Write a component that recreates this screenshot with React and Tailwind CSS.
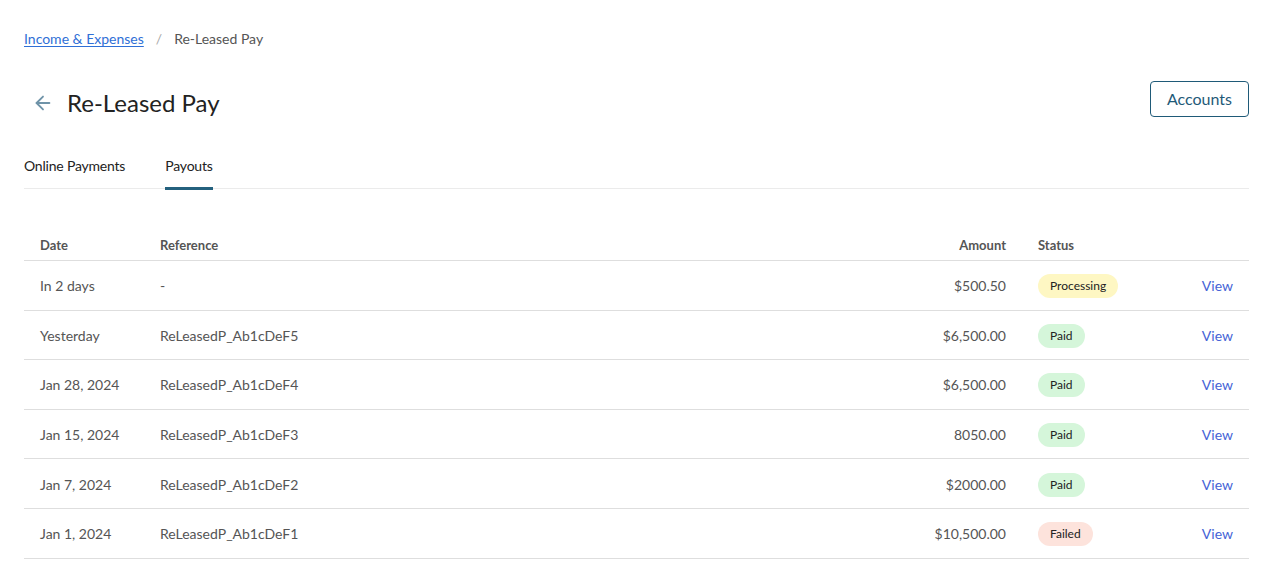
import React from 'react';
import { ArrowLeft } from 'lucide-react';

const payouts = [
  { date: 'In 2 days', reference: '-', amount: '$500.50', status: 'Processing' },
  { date: 'Yesterday', reference: 'ReLeasedP_Ab1cDeF5', amount: '$6,500.00', status: 'Paid' },
  { date: 'Jan 28, 2024', reference: 'ReLeasedP_Ab1cDeF4', amount: '$6,500.00', status: 'Paid' },
  { date: 'Jan 15, 2024', reference: 'ReLeasedP_Ab1cDeF3', amount: '8050.00', status: 'Paid' },
  { date: 'Jan 7, 2024', reference: 'ReLeasedP_Ab1cDeF2', amount: '$2000.00', status: 'Paid' },
  { date: 'Jan 1, 2024', reference: 'ReLeasedP_Ab1cDeF1', amount: '$10,500.00', status: 'Failed' },
];

const badgeStyles = {
  Processing: 'bg-[#fef7c3]',
  Paid: 'bg-[#d5f6da]',
  Failed: 'bg-[#fde3dc]',
};

const StatusBadge = ({ status }) => (
  <span className={`inline-flex items-center h-6 px-3 rounded-full text-xs text-[#222] ${badgeStyles[status]}`}>
    {status}
  </span>
);

const App = () => {
  return (
    <div className="min-h-screen bg-white pl-6 pr-[26px] pt-[27px] font-['Lato',sans-serif] text-[#333]">
      {/* breadcrumb */}
      <nav className="flex items-center text-sm h-6">
        <a href="#" className="text-[#2f6fd6] underline underline-offset-2">Income &amp; Expenses</a>
        <span className="mx-3 text-[#aaa]">/</span>
        <span className="text-[#555]">Re-Leased Pay</span>
      </nav>

      {/* header */}
      <div className="flex items-center justify-between mt-[30px]">
        <div className="flex items-center gap-[13px] pt-[6px]">
          <ArrowLeft className="w-[22px] h-[22px] ml-2 text-[#6f93a8]" strokeWidth={2} />
          <h1 className="text-2xl text-[#222]">Re-Leased Pay</h1>
        </div>
        <button className="h-9 px-4 mb-[2px] border border-[#1f5a78] rounded text-base text-[#1f5a78]">Accounts</button>
      </div>

      {/* tabs */}
      <div className="flex gap-10 mt-[33px] border-b border-[#ebebeb] text-sm text-[#222]">
        <div className="pb-[11px] pt-1 tracking-[-0.2px]">Online Payments</div>
        <div className="pb-[11px] pt-1 tracking-[-0.2px] border-b-[3px] border-[#24617e] -mb-[2px]">Payouts</div>
      </div>

      {/* table */}
      <table className="w-full mt-[48px] text-sm border-collapse">
        <thead>
          <tr className="border-b border-[#dedede] text-[13px] leading-4 text-[#555]">
            <th className="text-left font-bold px-4 pb-[7px] w-[120px]">Date</th>
            <th className="text-left font-bold px-4 pb-[7px]">Reference</th>
            <th className="text-right font-bold px-4 pb-[7px]">Amount</th>
            <th className="text-left font-bold px-4 pb-[7px] w-[147px]">Status</th>
            <th className="px-4 w-[80px]"></th>
          </tr>
        </thead>
        <tbody>
          {payouts.map((p, i) => (
            <tr key={i} className="border-b border-[#dedede] h-[49.6px] text-[#555]">
              <td className="px-4 pt-[2px]">{p.date}</td>
              <td className="px-4 pt-[2px]">{p.reference}</td>
              <td className="px-4 pt-[2px] text-right">{p.amount}</td>
              <td className="px-4 pt-[2px]"><StatusBadge status={p.status} /></td>
              <td className="px-4 pt-[2px] text-right">
                <a href="#" className="text-[#4563d6]">View</a>
              </td>
            </tr>
          ))}
        </tbody>
      </table>
    </div>
  );
};

export default App;
